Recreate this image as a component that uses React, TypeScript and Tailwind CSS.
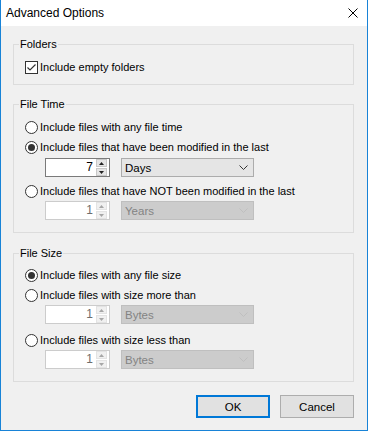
import React from "react";

const F = "font-['Liberation_Sans',Arial,sans-serif]";

function Radio({ checked }: { checked?: boolean }) {
  return (
    <span className="w-[13px] h-[13px] rounded-full border border-[#333333] bg-white flex items-center justify-center shrink-0">
      {checked && <span className="w-[7px] h-[7px] rounded-full bg-[#333333]" />}
    </span>
  );
}

function RadioRow({ checked, label, className = "" }: { checked?: boolean; label: string; className?: string }) {
  return (
    <div className={`h-[20px] flex items-center pl-[11px] ${className}`}>
      <Radio checked={checked} />
      <span className="ml-[2px] text-black">{label}</span>
    </div>
  );
}

function Tri({ up, color }: { up?: boolean; color: string }) {
  return (
    <svg width="5" height="3" viewBox="0 0 5 3">
      <polygon points={up ? "0,3 5,3 2.5,0" : "0,0 5,0 2.5,3"} fill={color} />
    </svg>
  );
}

function Spin({ value, disabled }: { value: string; disabled?: boolean }) {
  const c = disabled ? "#a6a6a6" : "#222222";
  const btn = disabled ? "bg-[#f0f0f0] border-[#e3e3e3]" : "bg-[#e5e5e5] border-[#c8c8c8]";
  return (
    <div
      className={`w-[65px] h-[19px] border bg-white flex items-stretch ${
        disabled ? "border-[#cccccc]" : "border-[#7a7a7a]"
      }`}
    >
      <span className={`flex-1 text-right pr-[3px] leading-[17px] text-[12px] ${disabled ? "text-[#6d6d6d]" : "text-black"}`}>{value}</span>
      <div className="w-[11px] mr-[2px] flex flex-col gap-[1px]">
        <div className={`flex-1 border flex items-center justify-center ${btn}`}>
          <Tri up color={c} />
        </div>
        <div className={`flex-1 border flex items-center justify-center ${btn}`}>
          <Tri color={c} />
        </div>
      </div>
    </div>
  );
}

function Combo({ value, disabled }: { value: string; disabled?: boolean }) {
  return (
    <div
      className={`ml-[11px] w-[133px] h-[19px] border flex items-center pl-[3px] pr-[5px] text-[11.5px] ${
        disabled ? "bg-[#cccccc] border-[#bfbfbf] text-[#838383]" : "bg-[#e5e5e5] border-[#acacac] text-black"
      }`}
    >
      <span className="flex-1">{value}</span>
      <svg width="9" height="5" viewBox="0 0 9 5">
        <polyline points="0.5,0.5 4.5,4.5 8.5,0.5" fill="none" stroke={disabled ? "#bfbfbf" : "#333333"} strokeWidth="1" />
      </svg>
    </div>
  );
}

function SpinRow({ value, unit, disabled, className = "" }: { value: string; unit: string; disabled?: boolean; className?: string }) {
  return (
    <div className={`flex items-center pl-[31px] ${className}`}>
      <Spin value={value} disabled={disabled} />
      <Combo value={unit} disabled={disabled} />
    </div>
  );
}

function Group({ title, children, className = "" }: { title: string; children: React.ReactNode; className?: string }) {
  return (
    <fieldset className={`w-[341px] border border-[#dcdcdc] m-0 p-0 ${className}`}>
      <legend className="ml-[5px] px-[1px] h-[16px] leading-[16px] text-black">{title}</legend>
      {children}
    </fieldset>
  );
}

export default function App() {
  return (
    <div className={`${F} text-[11px] leading-[16px] w-[368px] h-[431px] bg-[#f0f0f0] border border-t-0 border-[#1883d7] flex flex-col`}>
      <div className="h-[26px] bg-white flex items-center pl-[5px] shrink-0">
        <span className="flex-1 text-black text-[12px]">Advanced Options</span>
        <svg className="mr-[9px]" width="10" height="10" viewBox="0 0 10 10">
          <path d="M0.5 0.5 L9.5 9.5 M9.5 0.5 L0.5 9.5" stroke="#000" strokeWidth="1" />
        </svg>
      </div>
      <div className="pl-[12px] pr-[13px] flex flex-col">
        <Group title="Folders" className="mt-[10px]">
          <div className="h-[20px] mt-[5px] mb-[7px] flex items-center pl-[11px]">
            <span className="w-[13px] h-[13px] border border-[#333333] bg-white flex items-center justify-center shrink-0">
              <svg width="11" height="11" viewBox="0 0 11 11">
                <polyline points="1.5,5.5 4,8 9.5,2.5" fill="none" stroke="#333333" strokeWidth="1.2" />
              </svg>
            </span>
            <span className="ml-[2px]">Include empty folders</span>
          </div>
        </Group>
        <Group title="File Time" className="mt-[11px]">
          <div className="pt-[5px] pb-[12px]">
            <RadioRow label="Include files with any file time" />
            <RadioRow checked label="Include files that have been modified in the last" />
            <SpinRow value="7" unit="Days" className="mt-[1px]" />
            <RadioRow label="Include files that have NOT been modified in the last" className="mt-[4px]" />
            <SpinRow value="1" unit="Years" disabled />
          </div>
        </Group>
        <Group title="File Size" className="mt-[12px]">
          <div className="pt-[4px] pb-[12px]">
            <RadioRow checked label="Include files with any file size" />
            <RadioRow label="Include files with size more than" />
            <SpinRow value="1" unit="Bytes" disabled />
            <RadioRow label="Include files with size less than" className="mt-[6px]" />
            <SpinRow value="1" unit="Bytes" disabled />
          </div>
        </Group>
        <div className="mt-[13px] flex justify-end gap-[10px]">
          <button className="w-[74px] h-[23px] bg-[#e1e1e1] border-2 border-[#0078d7] text-black text-[11.5px]">OK</button>
          <button className="w-[74px] h-[23px] bg-[#e1e1e1] border border-[#adadad] text-black text-[11.5px]">Cancel</button>
        </div>
      </div>
    </div>
  );
}
